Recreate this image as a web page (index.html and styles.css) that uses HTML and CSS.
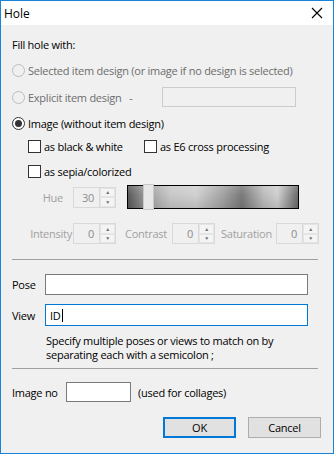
FILE: index.html
```html
<!DOCTYPE html>
<html lang="en">
<head>
    <meta charset="UTF-8" />
    <title>Hole</title>
    <link rel="stylesheet" href="styles.css">
</head>
<body>
    <div class="window">
        <div class="titlebar">
            <span class="title">Hole</span>
            <svg class="close" width="12" height="12" viewBox="0 0 12 12">
                <path d="M1 1 L11 11 M11 1 L1 11" stroke="#000" stroke-width="1.1" fill="none" />
            </svg>
        </div>

        <div class="content">
            <div class="row fill-label">Fill hole with:</div>

            <div class="row radio-row r1 disabled">
                <span class="radio"></span>
                <span>Selected item design (or image if no design is selected)</span>
            </div>

            <div class="row radio-row r2 disabled">
                <span class="radio"></span>
                <span class="explicit">Explicit item design&nbsp;&nbsp;&nbsp;-</span>
                <span class="textbox disabled-box"></span>
            </div>

            <div class="row radio-row r3">
                <span class="radio checked"></span>
                <span>Image (without item design)</span>
            </div>

            <div class="row check-row c1">
                <span class="check-item">
                    <span class="checkbox"></span>
                    <span>as black &amp; white</span>
                </span>
                <span class="check-item e6">
                    <span class="checkbox"></span>
                    <span>as E6 cross processing</span>
                </span>
            </div>

            <div class="row check-row c2">
                <span class="check-item">
                    <span class="checkbox"></span>
                    <span>as sepia/colorized</span>
                </span>
            </div>

            <div class="row hue-row">
                <span class="dim-label hue-label">Hue</span>
                <span class="spinner">
                    <span class="spin-value">30</span>
                    <span class="spin-buttons">
                        <span class="spin-btn">&#9650;</span>
                        <span class="spin-btn">&#9660;</span>
                    </span>
                </span>
                <span class="slider">
                    <span class="thumb"></span>
                </span>
            </div>

            <div class="row adjust-row">
                <span class="dim-label intensity-label">Intensity</span>
                <span class="spinner">
                    <span class="spin-value">0</span>
                    <span class="spin-buttons">
                        <span class="spin-btn">&#9650;</span>
                        <span class="spin-btn">&#9660;</span>
                    </span>
                </span>
                <span class="dim-label contrast-label">Contrast</span>
                <span class="spinner">
                    <span class="spin-value">0</span>
                    <span class="spin-buttons">
                        <span class="spin-btn">&#9650;</span>
                        <span class="spin-btn">&#9660;</span>
                    </span>
                </span>
                <span class="dim-label saturation-label">Saturation</span>
                <span class="spinner">
                    <span class="spin-value">0</span>
                    <span class="spin-buttons">
                        <span class="spin-btn">&#9650;</span>
                        <span class="spin-btn">&#9660;</span>
                    </span>
                </span>
            </div>

            <div class="separator sep1"></div>

            <div class="row field-row pose-row">
                <span class="field-label">Pose</span>
                <span class="textbox wide"></span>
            </div>

            <div class="row field-row view-row">
                <span class="field-label">View</span>
                <span class="textbox wide focused">ID<span class="caret"></span></span>
            </div>

            <div class="help">
                <div>Specify multiple poses or views to match on by</div>
                <div>separating each with a semicolon ;</div>
            </div>

            <div class="separator sep2"></div>

            <div class="row field-row image-row">
                <span class="field-label image-label">Image no</span>
                <span class="textbox small"></span>
                <span class="note">(used for collages)</span>
            </div>

            <div class="row buttons">
                <span class="button default">OK</span>
                <span class="button">Cancel</span>
            </div>
        </div>
    </div>
</body>
</html>
```

FILE: styles.css
```css
/* Basic reset */
* {
    margin: 0;
    padding: 0;
    box-sizing: border-box;
}

body {
    font-family: "Open Sans", "Noto Sans", sans-serif;
    font-size: 11px;
    letter-spacing: -0.25px;
    color: #000;
    background: #fff;
}

/* Dialog frame */
.window {
    width: 334px;
    height: 454px;
    border: 1px solid #1883d7;
    display: flex;
    flex-direction: column;
    background-color: #f0f0f0;
}

.titlebar {
    height: 24px;
    background-color: #fff;
    display: flex;
    align-items: center;
    justify-content: space-between;
    padding: 0 10px 0 3px;
}

.title {
    font-size: 12px;
    letter-spacing: 0;
}

.close {
    display: block;
    margin-top: -1px;
}

.content {
    flex: 1;
    padding: 0 0 0 11px;
    display: flex;
    flex-direction: column;
}

.row {
    display: flex;
    align-items: center;
    white-space: nowrap;
}

.fill-label {
    height: 16px;
    margin-top: 11px;
}

/* Radio buttons */
.radio-row {
    gap: 3px;
}

.r1 {
    height: 16px;
    margin-top: 10px;
}

.r2 {
    height: 20px;
    margin-top: 9px;
}

.r3 {
    height: 16px;
    margin-top: 8px;
}

.radio {
    width: 13px;
    height: 13px;
    border: 1px solid #333;
    border-radius: 50%;
    background-color: #fff;
    display: flex;
    align-items: center;
    justify-content: center;
}

.radio.checked::after {
    content: "";
    width: 7px;
    height: 7px;
    border-radius: 50%;
    background-color: #333;
}

.disabled {
    color: #6d6d6d;
}

.disabled .radio {
    border-color: #bcbcbc;
    background-color: #f0f0f0;
}

.explicit {
    width: 131px;
}

/* Checkboxes */
.check-row {
    height: 16px;
    padding-left: 16px;
}

.c1 {
    margin-top: 7px;
}

.c2 {
    margin-top: 9px;
}

.check-item {
    display: flex;
    align-items: center;
    gap: 3px;
    width: 116px;
}

.check-item.e6 {
    width: auto;
}

.checkbox {
    width: 13px;
    height: 13px;
    border: 1px solid #333;
    background-color: #fff;
}

/* Hue and adjustment spinners */
.hue-row {
    height: 26px;
    margin-top: 5px;
}

.dim-label {
    color: #a0a0a0;
}

.hue-label {
    width: 61px;
    text-align: right;
    padding-right: 10px;
}

.spinner {
    width: 43px;
    height: 21px;
    border: 1px solid #d9d9d9;
    display: flex;
}

.spin-value {
    flex: 1;
    text-align: right;
    padding-right: 5px;
    line-height: 19px;
    color: #8d8d8d;
}

.spin-buttons {
    width: 16px;
    display: flex;
    flex-direction: column;
    border-left: 1px solid #d9d9d9;
}

.spin-btn {
    flex: 1;
    font-size: 5px;
    color: #707070;
    display: flex;
    align-items: center;
    justify-content: center;
    border: 1px solid #e4e4e4;
    background-color: #f4f4f4;
}

.slider {
    width: 172px;
    height: 24px;
    margin-left: 11px;
    border: 1px solid #000;
    position: relative;
    background:
        linear-gradient(180deg, rgba(255, 255, 255, 0.15), rgba(0, 0, 0, 0) 40%, rgba(0, 0, 0, 0.1)),
        linear-gradient(90deg, #5a5a5a 0%, #9a9a9a 10%, #c8c8c8 25%, #d0d0d0 40%, #a6a6a6 55%, #7a7a7a 67%, #bdbdbd 80%, #cfcfcf 88%, #6a6a6a 100%);
}

/* Slider thumb sits on top of the track */
.thumb {
    position: absolute;
    left: 15px;
    top: -2px;
    width: 11px;
    height: 26px;
    background-color: #e6e6e6;
    border: 1px solid #c8c8c8;
}

.adjust-row {
    height: 21px;
    margin-top: 13px;
}

.intensity-label {
    width: 61px;
    text-align: right;
    padding-right: 1px;
}

.contrast-label {
    margin-left: 9px;
    width: 47px;
}

.saturation-label {
    margin-left: 6px;
    width: 55px;
}

/* Separators */
.separator {
    height: 1px;
    width: 306px;
    background-color: #a0a0a0;
}

.sep1 {
    margin-top: 15px;
}

.sep2 {
    margin-top: 7px;
}

/* Text fields */
.field-label {
    width: 33px;
}

.textbox {
    height: 21px;
    border: 1px solid #7a7a7a;
    background-color: #fff;
    display: flex;
    align-items: center;
    padding-left: 4px;
}

.disabled-box {
    width: 134px;
    height: 20px;
    border-color: #cccccc;
    background-color: #f0f0f0;
}

.wide {
    width: 263px;
}

.focused {
    border-color: #0078d7;
}

.caret {
    width: 1px;
    height: 13px;
    background-color: #000;
    margin-left: 1px;
}

.pose-row {
    height: 21px;
    margin-top: 14px;
}

.view-row {
    height: 22px;
    margin-top: 9px;
}

.view-row .textbox {
    height: 22px;
}

.help {
    margin-top: 8px;
    padding-left: 34px;
    line-height: 15px;
    white-space: nowrap;
}

.help div {
    height: 13px;
    line-height: 13px;
}

.help div + div {
    margin-top: 1px;
}

.image-row {
    height: 20px;
    margin-top: 13px;
}

.image-label {
    width: 54px;
}

.textbox.small {
    width: 65px;
    height: 20px;
}

.note {
    margin-left: 7px;
}

/* Dialog buttons */
.buttons {
    height: 21px;
    margin-top: 15px;
    padding-left: 151px;
    gap: 12px;
}

.button {
    width: 73px;
    height: 21px;
    border: 1px solid #adadad;
    background-color: #e1e1e1;
    display: flex;
    align-items: center;
    justify-content: center;
}

.button.default {
    border: 2px solid #0078d7;
}
```
